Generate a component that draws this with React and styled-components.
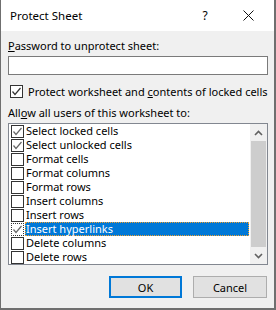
import React from 'react';
import styled, { createGlobalStyle } from 'styled-components';

const GlobalStyle = createGlobalStyle`
  html, body {
    margin: 0;
    padding: 0;
    background: #ffffff;
  }
  * {
    box-sizing: border-box;
  }
`;

const items = [
  { label: 'Select locked cells', checked: true },
  { label: 'Select unlocked cells', checked: true },
  { label: 'Format cells', checked: false },
  { label: 'Format columns', checked: false },
  { label: 'Format rows', checked: false },
  { label: 'Insert columns', checked: false },
  { label: 'Insert rows', checked: false },
  { label: 'Insert hyperlinks', checked: true, selected: true },
  { label: 'Delete columns', checked: false },
  { label: 'Delete rows', checked: false },
];

const Tick = ({ color }) => (
  <svg width="11" height="11" viewBox="0 0 11 11">
    <polyline points="1.5,5.5 4,8.5 9.5,2" fill="none" stroke={color} strokeWidth="1.2" />
  </svg>
);

const CheckBox = ({ checked, focus, tickColor }) => (
  <Box focus={focus}>{checked && <Tick color={tickColor} />}</Box>
);

const App = () => {
  return (
    <>
      <GlobalStyle />
      <Dialog>
        <TitleBar>
          <Title>Protect Sheet</Title>
          <Help>?</Help>
          <Close>
            <svg width="11" height="11" viewBox="0 0 11 11">
              <path d="M0.5 0.5 L10.5 10.5 M10.5 0.5 L0.5 10.5" stroke="#111" strokeWidth="1" />
            </svg>
          </Close>
        </TitleBar>
        <Body>
          <Label>
            <u>P</u>assword to unprotect sheet:
          </Label>
          <Input />
          <CheckRow>
            <CheckBox checked tickColor="#333" />
            <span>
              Protect worksheet and <u>c</u>ontents of locked cells
            </span>
          </CheckRow>
          <Label top={7}>
            All<u>o</u>w all users of this worksheet to:
          </Label>
          <List>
            <Rows>
              {items.map((item) => (
                <Row key={item.label}>
                  <CheckBox checked={item.checked} focus={item.selected} tickColor="#666" />
                  <RowText selected={item.selected}>{item.label}</RowText>
                </Row>
              ))}
            </Rows>
            <ScrollBar>
              <Arrow>
                <svg width="9" height="6" viewBox="0 0 9 6">
                  <polyline points="1,5 4.5,1.5 8,5" fill="none" stroke="#606060" strokeWidth="1.6" />
                </svg>
              </Arrow>
              <Track>
                <Thumb />
              </Track>
              <Arrow>
                <svg width="9" height="6" viewBox="0 0 9 6">
                  <polyline points="1,1 4.5,4.5 8,1" fill="none" stroke="#606060" strokeWidth="1.6" />
                </svg>
              </Arrow>
            </ScrollBar>
          </List>
          <Buttons>
            <Button primary>OK</Button>
            <Button>Cancel</Button>
          </Buttons>
        </Body>
      </Dialog>
    </>
  );
};

export default App;

const Dialog = styled.div`
  width: 276px;
  height: 310px;
  background: #f0f0f0;
  border-left: 1px solid #6f6f6f;
  border-right: 2px solid #6f6f6f;
  border-bottom: 2px solid #6f6f6f;
  font-family: 'Noto Sans', 'Open Sans', sans-serif;
  font-size: 11px;
  color: #000;
  display: flex;
  flex-direction: column;
`;

const TitleBar = styled.div`
  height: 31px;
  background: #ffffff;
  display: flex;
  align-items: center;
  padding-left: 9px;
`;

const Title = styled.div`
  flex: 1;
  font-size: 11.5px;
  line-height: 16px;
`;

const Help = styled.div`
  width: 14px;
  text-align: center;
  font-size: 12px;
  line-height: 16px;
  margin-right: 31px;
`;

const Close = styled.div`
  width: 11px;
  height: 11px;
  display: flex;
  margin-right: 20px;
`;

const Body = styled.div`
  flex: 1;
  display: flex;
  flex-direction: column;
  padding: 7px 6px 0 7px;
`;

const Label = styled.div`
  line-height: 16px;
  height: 16px;
  margin-top: ${(p) => p.top || 0}px;
  white-space: nowrap;
`;

const Input = styled.div`
  margin-top: 2px;
  height: 19px;
  background: #fff;
  border: 1px solid #7a7a7a;
`;

const CheckRow = styled.div`
  margin-top: 10px;
  height: 13px;
  display: flex;
  align-items: center;
  gap: 5px;
  padding-left: 2px;
  line-height: 13px;
  white-space: nowrap;
`;

const Box = styled.div`
  width: 13px;
  height: 13px;
  flex: none;
  background: #fff;
  border: 1px ${(p) => (p.focus ? 'dotted' : 'solid')} #333;
  display: flex;
  align-items: center;
  justify-content: center;
`;

const List = styled.div`
  margin-top: 2px;
  height: 142px;
  background: #fff;
  border: 1px solid #828790;
  display: flex;
`;

const Rows = styled.div`
  flex: 1;
  display: flex;
  flex-direction: column;
  padding-left: 2px;
`;

const Row = styled.div`
  height: 14px;
  display: flex;
  align-items: center;
  gap: 1px;
`;

const RowText = styled.div`
  flex: 1;
  height: 14px;
  line-height: 12px;
  padding-left: 0;
  white-space: nowrap;
  background: ${(p) => (p.selected ? '#0078d7' : 'transparent')};
  color: ${(p) => (p.selected ? '#fff' : '#000')};
  border: 1px dotted ${(p) => (p.selected ? '#f0a030' : 'transparent')};
`;

const ScrollBar = styled.div`
  width: 17px;
  margin-left: 1px;
  background: #f0f0f0;
  display: flex;
  flex-direction: column;
`;

const Arrow = styled.div`
  height: 17px;
  display: flex;
  align-items: center;
  justify-content: center;
`;

const Track = styled.div`
  flex: 1;
  padding: 0 1px;
`;

const Thumb = styled.div`
  height: 106px;
  background: #cdcdcd;
`;

const Buttons = styled.div`
  margin-top: 11px;
  display: flex;
  justify-content: flex-end;
  gap: 11px;
  padding-right: 1px;
`;

const Button = styled.div`
  width: ${(p) => (p.primary ? 73 : 74)}px;
  height: 22px;
  background: #e1e1e1;
  border: ${(p) => (p.primary ? '2px solid #0078d7' : '1px solid #adadad')};
  display: flex;
  align-items: center;
  justify-content: center;
  font-size: 11px;
`;
